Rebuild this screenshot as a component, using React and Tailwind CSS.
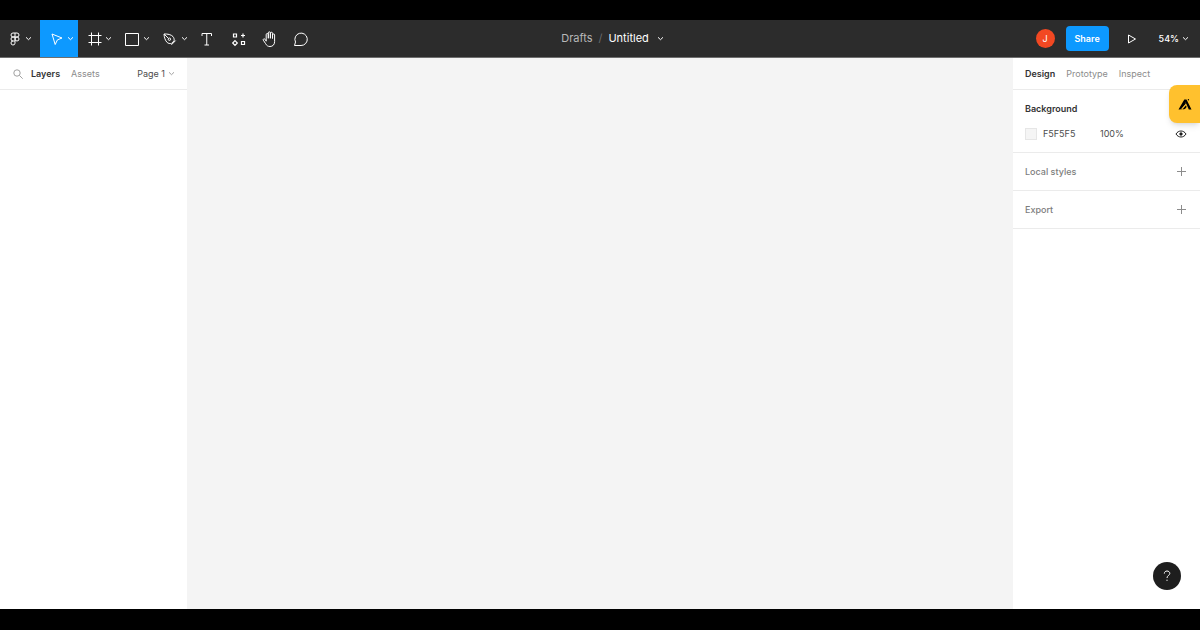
import { useState } from "react";

function Icon({ size = 16, children, className = "" }) {
  return (
    <svg
      width={size}
      height={size}
      viewBox={`0 0 ${size} ${size}`}
      fill="none"
      stroke="currentColor"
      className={`shrink-0 ${className}`}
      aria-hidden="true"
    >
      {children}
    </svg>
  );
}

function Chevron({ className = "" }) {
  return (
    <Icon size={7} className={className}>
      <path d="M1 2.3 3.5 4.7 6 2.3" />
    </Icon>
  );
}

function Plus() {
  return (
    <Icon size={9} className="text-[#8c8c8c]">
      <path d="M4.5 0v9M0 4.5h9" />
    </Icon>
  );
}

const shapeTools = [
  {
    name: "Move",
    icon: <path d="M4 3 14 7 9.4 8.900 7.200 13.500z" strokeLinejoin="round" />,
  },
  {
    name: "Frame",
    icon: <path d="M5.500 1.500v13M12.500 1.500v13M2.500 4.500h13M2.500 11.500h13" />,
  },
  { name: "Rectangle", icon: <path d="M1.500 2.500h13v12h-13z" /> },
  {
    name: "Pen",
    icon: (
      <>
        <path
          d="M2 3C5.500 2.800 9.300 3.600 11 5.600c1.100 1.300 1.300 2.900 1.100 4.200l-2.700 2.700c-1.500.2-3.100 0-4.200-1C3.200 9.600 2.200 6.400 2 3z"
          strokeLinejoin="round"
        />
        <path d="m2.200 3.200 4.200 4.100M9.400 13.800l4.200-4.200" />
        <circle cx="7.400" cy="8.200" r="1.200" />
      </>
    ),
  },
];

const plainTools = [
  {
    name: "Text",
    icon: <path d="M2 5V2.500h9.500V5M6.750 2.500v11.500M4.500 14h4.500" />,
  },
  {
    name: "Resources",
    icon: (
      <>
        <path d="M2.500 3h3v3h-3zM10.500 10.500h3v3h-3z" strokeWidth="1.200" />
        <path d="M12 2.500v4M10 4.500h4" strokeWidth="1.200" />
        <path d="m4 9.700 2.300 2.300L4 14.300 1.700 12z" strokeWidth="1.200" />
      </>
    ),
  },
  {
    name: "Hand tool",
    icon: (
      <path
        d="M4.200 9.800V3.600a1 1 0 0 1 2.100 0v3.700V1.900a1 1 0 0 1 2.100 0v5.400V2.300a1 1 0 0 1 2.100 0v5.200V4a1 1 0 0 1 2.100 0v6.700c0 3-2 4.800-4.600 4.800-2.200 0-3.400-1-4.500-3L1.300 9.200c-.5-1.200.8-1.900 1.600-1.100z"
        strokeLinecap="round"
        strokeLinejoin="round"
      />
    ),
  },
  {
    name: "Comment",
    icon: (
      <path
        d="M1.500 14.500h6.500a6.200 6.200 0 1 0-5.500-3.500z"
        strokeLinejoin="round"
      />
    ),
  },
];

function Toolbar() {
  const [tool, setTool] = useState("Move");

  return (
    <header className="flex h-[38px] items-stretch border-b border-[#6e6e6e] bg-[#2c2c2c] text-white">
      <div className="flex flex-1">
        <button
          type="button"
          aria-label="Main menu"
          className="flex w-10 items-center gap-[3px] pl-2"
        >
          <Icon size={14}>
            <path d="M7 1H5a2 2 0 0 0 0 4h4a2 2 0 0 0 0-4H7M7 5H5a2 2 0 0 0 0 4h2M7 1v10.200A2 2 0 1 1 5 9" />
            <circle cx="9" cy="7" r="2" />
          </Icon>
          <Chevron />
        </button>
        {shapeTools.map((t) => (
          <button
            key={t.name}
            type="button"
            aria-label={t.name}
            aria-pressed={tool === t.name}
            onClick={() => setTool(t.name)}
            className={`flex w-[38px] items-center justify-end gap-[3px] pr-1 ${
              tool === t.name ? "bg-[#0d99ff]" : ""
            }`}
          >
            <Icon>{t.icon}</Icon>
            <Chevron />
          </button>
        ))}
        {plainTools.map((t) => (
          <button
            key={t.name}
            type="button"
            aria-label={t.name}
            aria-pressed={tool === t.name}
            onClick={() => setTool(t.name)}
            className={`flex w-[31px] items-center justify-center ${
              tool === t.name ? "bg-[#0d99ff]" : ""
            }`}
          >
            <Icon>{t.icon}</Icon>
          </button>
        ))}
      </div>

      <div className="flex items-center pl-9 text-[11px]">
        <a href="#drafts" className="text-[#b8b8b8]">
          Drafts
        </a>
        <span className="px-1.5 text-[#6b6b6b]">/</span>
        <button type="button" className="flex items-center gap-2">
          Untitled
          <Chevron />
        </button>
      </div>

      <div className="flex flex-1 items-center justify-end pr-[11px]">
        <span className="flex size-[19px] items-center justify-center rounded-full bg-[#f24822] text-[9px]">
          J
        </span>
        <button
          type="button"
          className="ml-[11px] h-[25px] w-[43px] rounded bg-[#0d99ff] text-[9px] font-semibold"
        >
          Share
        </button>
        <button type="button" aria-label="Present" className="ml-4">
          <Icon size={14}>
            <path d="M3.500 3v8l7-4z" strokeLinejoin="round" />
          </Icon>
        </button>
        <button
          type="button"
          className="ml-5 flex items-center gap-[3px] text-[9px] font-medium"
        >
          54%
          <Chevron />
        </button>
      </div>
    </header>
  );
}

function LayersPanel() {
  return (
    <aside className="w-[187px] shrink-0 bg-white">
      <div className="flex h-8 items-center border-b border-[#ebebeb] pr-3 pl-[13px]">
        <button type="button" aria-label="Search" className="text-[#a0a0a0]">
          <Icon size={10}>
            <circle cx="4" cy="4" r="3.200" />
            <path d="m6.400 6.400 3.300 3.300" />
          </Icon>
        </button>
        <button type="button" className="ml-2 font-semibold text-[#333]">
          Layers
        </button>
        <button type="button" className="ml-[11px] text-[#8c8c8c]">
          Assets
        </button>
        <button type="button" className="ml-auto flex items-center gap-[3px]">
          Page 1
          <Chevron className="text-[#a0a0a0]" />
        </button>
      </div>
    </aside>
  );
}

function Section({ title }) {
  return (
    <section className="flex h-[38px] items-center justify-between border-b border-[#ebebeb] pr-[14px] pl-3 text-[#7d7d7d]">
      <h2 className="font-medium">{title}</h2>
      <button type="button" aria-label={`Add ${title}`}>
        <Plus />
      </button>
    </section>
  );
}

function DesignPanel() {
  return (
    <aside className="relative w-[187px] shrink-0 bg-white">
      <nav className="flex h-8 items-center gap-[11px] border-b border-[#ebebeb] px-3 text-[#8c8c8c]">
        <button type="button" className="font-semibold text-[#333]">
          Design
        </button>
        <button type="button">Prototype</button>
        <button type="button">Inspect</button>
      </nav>

      <section className="h-[63px] border-b border-[#ebebeb] pt-[13px] pr-[13px] pl-3">
        <h2 className="font-semibold text-[#333]">Background</h2>
        <div className="mt-[13px] flex h-3 items-center">
          <button
            type="button"
            aria-label="Background color"
            className="size-3 border border-[#e6e6e6] bg-[#f5f5f5]"
          />
          <input
            aria-label="Hex value"
            defaultValue="F5F5F5"
            className="ml-1.5 w-[57px] outline-none"
          />
          <input
            aria-label="Opacity"
            defaultValue="100%"
            className="w-8 outline-none"
          />
          <button
            type="button"
            aria-label="Toggle visibility"
            className="ml-auto text-[#1e1e1e]"
          >
            <Icon size={12}>
              <path d="M1 6c2.300-4 7.700-4 10 0-2.300 4-7.700 4-10 0z" />
              <circle cx="6" cy="6" r="1.200" fill="currentColor" />
            </Icon>
          </button>
        </div>
      </section>

      <Section title="Local styles" />
      <Section title="Export" />

      {/* browser extension tab docked on the window edge */}
      <button
        type="button"
        aria-label="Open extension"
        className="absolute top-[27px] right-0 flex h-[38px] w-[31px] items-center justify-center rounded-l-lg bg-[#ffc12e] text-black shadow-md"
      >
        <svg width="14" height="12" viewBox="0 0 14 12" aria-hidden="true">
          <path d="M.5 11.500 6.300 1.500h2.200L13.500 11.500h-2.700L7.600 4.200 3.500 11.500z" />
          <path d="M4.300 11.500 8 7.200l.6 1.800-1.600 2z" />
          <path d="m4.700 8.300 2.500-4.400.6 1.700-2.300 2.900z" />
          <path d="M2.700 11.700 7.700 6.300" stroke="#ffc12e" strokeWidth=".6" />
          <circle cx="10.400" cy="1.700" r=".7" />
        </svg>
      </button>

      <button
        type="button"
        aria-label="Help"
        className="absolute right-[19px] bottom-[19px] flex size-7 items-center justify-center rounded-full bg-[#1e1e1e] text-white"
      >
        <Icon size={12}>
          <path d="M3.300 3.600C3.300 2 4.500 1 6 1s2.800 1 2.800 2.400C8.800 5.300 6 5.500 6 8M6 9.700v1.200" />
        </Icon>
      </button>
    </aside>
  );
}

export default function App() {
  return (
    <div className="flex min-h-screen flex-col bg-black pt-5 pb-[21px] font-['Inter',sans-serif]">
      <Toolbar />
      <div className="flex flex-1 text-[9px] leading-3 text-[#4d4d4d]">
        <LayersPanel />
        <main className="flex-1 bg-[#f4f4f4]" />
        <DesignPanel />
      </div>
    </div>
  );
}
